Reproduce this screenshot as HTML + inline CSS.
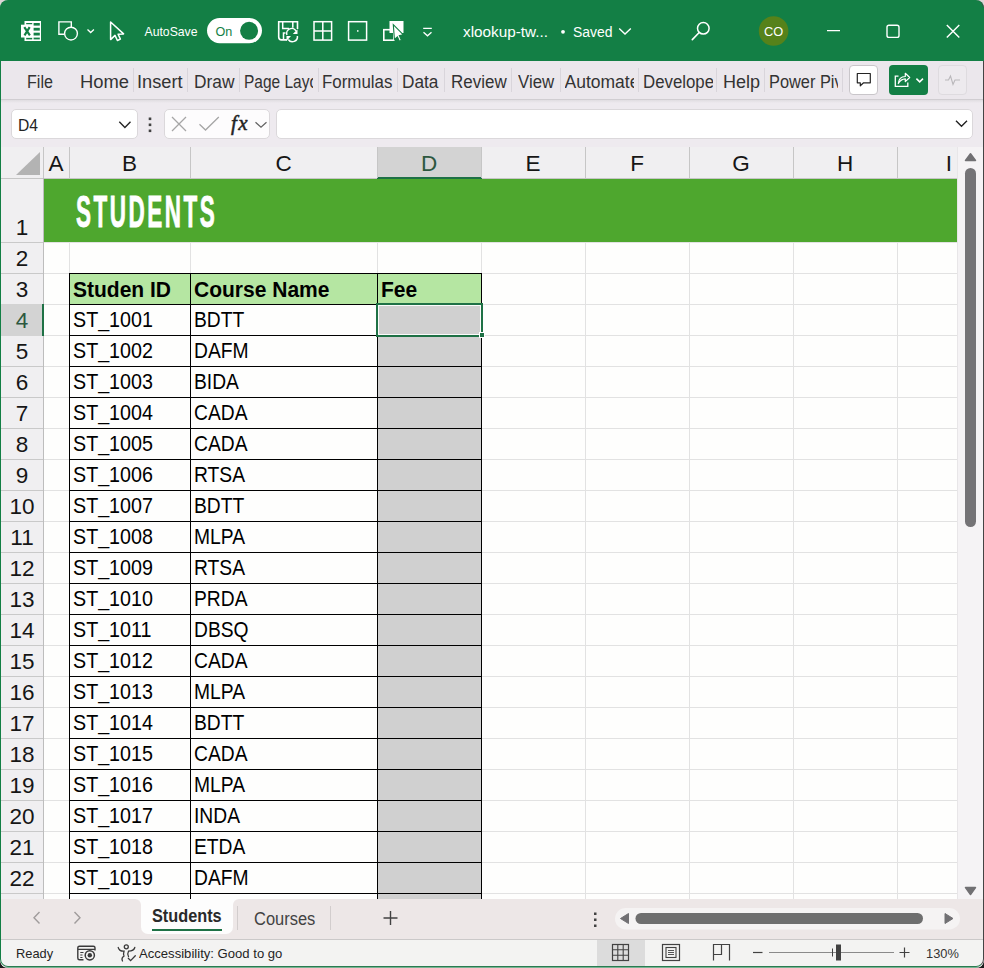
<!DOCTYPE html>
<html><head><meta charset="utf-8"><style>
*{margin:0;padding:0;box-sizing:border-box}
html,body{width:984px;height:968px;overflow:hidden;background:linear-gradient(#dcd7d7 50%,#1b1b1b 50%);font-family:"Liberation Sans",sans-serif}
.a{position:absolute}
#win{position:absolute;left:0;top:0;width:984px;height:968px;border-radius:8px;overflow:hidden;background:#ebe7ec}
.t{position:absolute;white-space:nowrap;line-height:1}
svg{position:absolute;left:0;top:0;overflow:visible}
</style></head>
<body><div id="win">
<div class="a" style="left:0;top:0;width:984px;height:61px;background:#137f45"></div>
<svg width="984" height="61"><rect x="24.5" y="21" width="16.5" height="20" fill="#ffffff"/><rect x="33.6" y="23" width="6.2" height="2.6000000000000014" fill="#137f45"/><rect x="33.6" y="27.8" width="6.2" height="2.8000000000000007" fill="#137f45"/><rect x="33.6" y="32.7" width="6.2" height="2.799999999999997" fill="#137f45"/><rect x="33.6" y="37.6" width="6.2" height="1.7999999999999972" fill="#137f45"/><rect x="26.2" y="23" width="6" height="1.3000000000000007" fill="#137f45"/><rect x="26.2" y="37.7" width="6" height="1.6999999999999957" fill="#137f45"/><rect x="21" y="24.7" width="11.6" height="12.8" fill="#ffffff"/><path d="M24.3 27.2 L29.9 35.3 M29.7 27.2 L24.5 35.3" stroke="#137f45" stroke-width="2.2"/><path d="M71.3 27 V21.9 H58.9 V34.2 H64.2" fill="none" stroke="#ffffff" stroke-width="1.4"/><circle cx="71" cy="33.6" r="6.4" fill="none" stroke="#ffffff" stroke-width="1.4"/><path d="M87.5 29.5 L90.7 32.5 L93.9 29.5" fill="none" stroke="#ffffff" stroke-width="1.3"/><path d="M110.6 22 V39.6 L115 35.4 L117.4 40.5 L120.4 39.1 L118.1 34.2 L123.6 33.9 Z" fill="none" stroke="#ffffff" stroke-width="1.5" stroke-linejoin="round"/><text x="144.5" y="36" font-family="Liberation Sans" font-size="13.3" fill="#ffffff" textLength="53" lengthAdjust="spacingAndGlyphs">AutoSave</text><rect x="207" y="18" width="55" height="25.2" rx="12.6" fill="#ffffff"/><text x="215.5" y="35.8" font-family="Liberation Sans" font-size="12.6" fill="#137f45">On</text><circle cx="249.1" cy="30.8" r="9" fill="#137f45"/><path d="M287 39.9 H281.5 Q278.7 39.9 278.7 37 V21.8 H297.5 V29" fill="none" stroke="#ffffff" stroke-width="1.6"/><path d="M282.7 22 V28.6 H289 M292.8 22 V27.8 M283.5 40 V33 H285.5" fill="none" stroke="#ffffff" stroke-width="1.5"/><path d="M286.9 35 A5 5 0 0 1 296 31 M297.4 36 A5 5 0 0 1 288.3 39.5" fill="none" stroke="#ffffff" stroke-width="1.5"/><path d="M297.5 29.2 V34 H292.8 Z M286.5 41 V36 H291 Z" fill="#ffffff"/><rect x="314" y="21.7" width="17.6" height="18.4" fill="none" stroke="#ffffff" stroke-width="1.5"/><path d="M322.8 21.7 V40.1 M314 30.9 H331.6" stroke="#ffffff" stroke-width="1.5"/><rect x="348.6" y="21.7" width="18" height="18.4" fill="none" stroke="#ffffff" stroke-width="1.5"/><rect x="357" y="30.2" width="1.5" height="1.5" fill="#ffffff"/><rect x="389.5" y="21" width="14" height="12" fill="#ffffff"/><rect x="383.8" y="29.7" width="10" height="10.5" fill="none" stroke="#ffffff" stroke-width="1.6"/><path d="M393.3 24.6 L403.2 34.7 L399.3 35.6 L401.4 40.2 L399.4 41.2 L397.4 36.8 L394.4 39.4 Z" fill="#ffffff" stroke="#137f45" stroke-width="1.1"/><path d="M423.2 28.3 H431.8 M423.5 32.2 L427.5 35.8 L431.5 32.2" fill="none" stroke="#ffffff" stroke-width="1.3"/><text x="463" y="36.8" font-family="Liberation Sans" font-size="15.3" fill="#ffffff" textLength="85" lengthAdjust="spacingAndGlyphs">xlookup-tw...</text><circle cx="563" cy="31.8" r="1.9" fill="#ffffff"/><text x="573" y="36.8" font-family="Liberation Sans" font-size="15.3" fill="#ffffff" textLength="39.5" lengthAdjust="spacingAndGlyphs">Saved</text><path d="M619.2 28.5 L625 34 L630.8 28.5" fill="none" stroke="#ffffff" stroke-width="1.4"/><circle cx="703.3" cy="28.3" r="5.8" fill="none" stroke="#ffffff" stroke-width="1.5"/><path d="M699.2 32.5 L692.3 39.6" stroke="#ffffff" stroke-width="1.6" stroke-linecap="round"/><circle cx="773.6" cy="31" r="14.8" fill="#56821a"/><text x="773.6" y="35.8" text-anchor="middle" font-family="Liberation Sans" font-size="12.8" fill="#ffffff">CO</text><path d="M827 30.6 H840" stroke="#ffffff" stroke-width="1.4"/><rect x="887" y="25.2" width="12" height="12.2" rx="2" fill="none" stroke="#ffffff" stroke-width="1.4"/><path d="M946.8 25 L959.3 37.5 M959.3 25 L946.8 37.5" stroke="#ffffff" stroke-width="1.4"/></svg>
<div class="a" style="left:1px;top:61px;width:982px;height:38px;background:#ebe7ec"></div>
<div class="t" style="left:26.9px;top:74px;font-size:17.5px;color:#333;transform:scaleX(0.92);transform-origin:0 0">File</div>
<div class="t" style="left:79.5px;top:74px;font-size:17.5px;color:#333;transform:scaleX(1.05);transform-origin:0 0">Home</div>
<div class="t" style="left:136.6px;top:74px;font-size:17.5px;color:#333;transform:scaleX(1.04);transform-origin:0 0">Insert</div>
<div class="t" style="left:193.6px;top:74px;font-size:17.5px;color:#333;transform:scaleX(0.99);transform-origin:0 0">Draw</div>
<div class="t" style="left:243.5px;top:74px;width:69.5px;height:20px;overflow:hidden"><div style="font-size:17.5px;color:#333;transform:scaleX(0.885);transform-origin:0 0">Page Layout</div></div>
<div class="t" style="left:322.4px;top:74px;font-size:17.5px;color:#333;transform:scaleX(0.965);transform-origin:0 0">Formulas</div>
<div class="t" style="left:401.7px;top:74px;font-size:17.5px;color:#333;transform:scaleX(0.985);transform-origin:0 0">Data</div>
<div class="t" style="left:451px;top:74px;font-size:17.5px;color:#333;transform:scaleX(0.97);transform-origin:0 0">Review</div>
<div class="t" style="left:518.3px;top:74px;font-size:17.5px;color:#333;transform:scaleX(0.96);transform-origin:0 0">View</div>
<div class="t" style="left:564.5px;top:74px;width:69.5px;height:20px;overflow:hidden"><div style="font-size:17.5px;color:#333;transform:scaleX(1.0);transform-origin:0 0">Automate</div></div>
<div class="t" style="left:642.6px;top:74px;width:70.39999999999998px;height:20px;overflow:hidden"><div style="font-size:17.5px;color:#333;transform:scaleX(0.96);transform-origin:0 0">Developer</div></div>
<div class="t" style="left:722.6px;top:74px;font-size:17.5px;color:#333;transform:scaleX(1.03);transform-origin:0 0">Help</div>
<div class="t" style="left:768.6px;top:74px;width:69.39999999999998px;height:20px;overflow:hidden"><div style="font-size:17.5px;color:#333;transform:scaleX(0.935);transform-origin:0 0">Power Pivot</div></div>
<div class="a" style="left:133px;top:68px;width:1px;height:24px;background:#d9d5db"></div>
<div class="a" style="left:187px;top:68px;width:1px;height:24px;background:#d9d5db"></div>
<div class="a" style="left:239px;top:68px;width:1px;height:24px;background:#d9d5db"></div>
<div class="a" style="left:318px;top:68px;width:1px;height:24px;background:#d9d5db"></div>
<div class="a" style="left:397px;top:68px;width:1px;height:24px;background:#d9d5db"></div>
<div class="a" style="left:444px;top:68px;width:1px;height:24px;background:#d9d5db"></div>
<div class="a" style="left:511px;top:68px;width:1px;height:24px;background:#d9d5db"></div>
<div class="a" style="left:560px;top:68px;width:1px;height:24px;background:#d9d5db"></div>
<div class="a" style="left:638px;top:68px;width:1px;height:24px;background:#d9d5db"></div>
<div class="a" style="left:716px;top:68px;width:1px;height:24px;background:#d9d5db"></div>
<div class="a" style="left:764px;top:68px;width:1px;height:24px;background:#d9d5db"></div>
<div class="a" style="left:842px;top:68px;width:1px;height:24px;background:#d9d5db"></div>
<div class="a" style="left:849px;top:65px;width:29px;height:30px;background:#fff;border:1px solid #c9c6ca;border-radius:4px"></div>
<svg width="984" height="100"><path d="M857.3 73.5 H870.3 V82.8 H863.6 L860.3 85.8 V82.8 H857.3 Z" fill="none" stroke="#242424" stroke-width="1.2" stroke-linejoin="round"/></svg>
<div class="a" style="left:889px;top:65px;width:39px;height:30px;background:#137f45;border-radius:4px"></div>
<svg width="984" height="100"><path d="M898.5 76.2 H895.3 V86.3 H907.8 V82.5" fill="none" stroke="#fff" stroke-width="1.3"/><path d="M898.3 83.5 Q898.8 76.8 905.3 76.5 V73.3 L909.7 77.5 L905.3 81.6 V78.8 Q900.8 79 898.3 83.5 Z" fill="none" stroke="#fff" stroke-width="1.2" stroke-linejoin="round"/><path d="M916.4 78.6 L919.7 81.9 L923 78.6" fill="none" stroke="#fff" stroke-width="1.5"/></svg>
<div class="a" style="left:938px;top:65px;width:29px;height:30px;background:#edeaee;border:1px solid #dedbdf;border-radius:4px"></div>
<svg width="984" height="100"><path d="M945 80 H948.5 L950.5 76 L953 84.5 L955 80 H960" fill="none" stroke="#b9b7ba" stroke-width="1.1"/></svg>
<div class="a" style="left:1px;top:99px;width:982px;height:48px;background:#eeeaef"></div>
<div class="a" style="left:1px;top:99px;width:982px;height:1px;background:#d0cdd1"></div>
<div class="a" style="left:1px;top:100px;width:982px;height:3px;background:linear-gradient(#e0dde1,#eeeaef)"></div>
<div class="a" style="left:11px;top:109px;width:127px;height:30px;background:#fff;border:1px solid #dbd8db;border-radius:5px"></div>
<div class="t" style="left:18px;top:117px;font-size:17px;color:#242424;transform:scaleX(0.92);transform-origin:0 0">D4</div>
<div class="a" style="left:164px;top:109px;width:106px;height:30px;background:#fdfcfd;border:1px solid #dbd8db;border-radius:5px"></div>
<div class="a" style="left:276px;top:109px;width:697px;height:30px;background:#fff;border:1px solid #dbd8db;border-radius:5px"></div>
<svg width="984" height="150"><path d="M119.3 121.8 L124.9 127.4 L130.5 121.8" fill="none" stroke="#242424" stroke-width="1.4"/><rect x="148.7" y="117.5" width="2.6" height="2.6" fill="#424242"/><rect x="148.7" y="123.5" width="2.6" height="2.6" fill="#424242"/><rect x="148.7" y="129.5" width="2.6" height="2.6" fill="#424242"/><path d="M172 117 L186 131 M186 117 L172 131" stroke="#a6a6a6" stroke-width="1.3"/><path d="M199.5 124.3 L205.5 130 L218.8 117" fill="none" stroke="#a6a6a6" stroke-width="1.3"/><text x="231" y="130" font-family="Liberation Serif" font-style="italic" font-size="21" fill="#242424" stroke="#242424" stroke-width="0.5" letter-spacing="1.5">fx</text><path d="M255.5 122.3 L261 127.3 L266.5 122.3" fill="none" stroke="#616161" stroke-width="1.2"/><path d="M956 120.8 L961.5 126.3 L967 120.8" fill="none" stroke="#242424" stroke-width="1.4"/></svg>
<div class="a" style="left:1px;top:147px;width:956px;height:31px;background:#f0eff1"></div>
<div class="a" style="left:1px;top:178px;width:42px;height:721px;background:#f0eff1"></div>
<div class="a" style="left:43px;top:178px;width:914px;height:721px;background:#fefefd"></div>
<svg width="984" height="200"><path d="M40 152 V175 H16 Z" fill="#b3b3b3"/></svg>
<div class="a" style="left:43px;top:242px;width:914px;height:1px;background:#e2e2e2"></div>
<div class="a" style="left:43px;top:273px;width:914px;height:1px;background:#e2e2e2"></div>
<div class="a" style="left:43px;top:304px;width:914px;height:1px;background:#e2e2e2"></div>
<div class="a" style="left:43px;top:335px;width:914px;height:1px;background:#e2e2e2"></div>
<div class="a" style="left:43px;top:366px;width:914px;height:1px;background:#e2e2e2"></div>
<div class="a" style="left:43px;top:397px;width:914px;height:1px;background:#e2e2e2"></div>
<div class="a" style="left:43px;top:428px;width:914px;height:1px;background:#e2e2e2"></div>
<div class="a" style="left:43px;top:459px;width:914px;height:1px;background:#e2e2e2"></div>
<div class="a" style="left:43px;top:490px;width:914px;height:1px;background:#e2e2e2"></div>
<div class="a" style="left:43px;top:521px;width:914px;height:1px;background:#e2e2e2"></div>
<div class="a" style="left:43px;top:552px;width:914px;height:1px;background:#e2e2e2"></div>
<div class="a" style="left:43px;top:583px;width:914px;height:1px;background:#e2e2e2"></div>
<div class="a" style="left:43px;top:614px;width:914px;height:1px;background:#e2e2e2"></div>
<div class="a" style="left:43px;top:645px;width:914px;height:1px;background:#e2e2e2"></div>
<div class="a" style="left:43px;top:676px;width:914px;height:1px;background:#e2e2e2"></div>
<div class="a" style="left:43px;top:707px;width:914px;height:1px;background:#e2e2e2"></div>
<div class="a" style="left:43px;top:738px;width:914px;height:1px;background:#e2e2e2"></div>
<div class="a" style="left:43px;top:769px;width:914px;height:1px;background:#e2e2e2"></div>
<div class="a" style="left:43px;top:800px;width:914px;height:1px;background:#e2e2e2"></div>
<div class="a" style="left:43px;top:831px;width:914px;height:1px;background:#e2e2e2"></div>
<div class="a" style="left:43px;top:862px;width:914px;height:1px;background:#e2e2e2"></div>
<div class="a" style="left:43px;top:893px;width:914px;height:1px;background:#e2e2e2"></div>
<div class="a" style="left:69px;top:242px;width:1px;height:657px;background:#e2e2e2"></div>
<div class="a" style="left:190px;top:242px;width:1px;height:657px;background:#e2e2e2"></div>
<div class="a" style="left:377px;top:242px;width:1px;height:657px;background:#e2e2e2"></div>
<div class="a" style="left:481px;top:242px;width:1px;height:657px;background:#e2e2e2"></div>
<div class="a" style="left:585px;top:242px;width:1px;height:657px;background:#e2e2e2"></div>
<div class="a" style="left:689px;top:242px;width:1px;height:657px;background:#e2e2e2"></div>
<div class="a" style="left:793px;top:242px;width:1px;height:657px;background:#e2e2e2"></div>
<div class="a" style="left:897px;top:242px;width:1px;height:657px;background:#e2e2e2"></div>
<div class="a" style="left:44px;top:178px;width:913px;height:64px;background:#4ea72e"></div>
<div class="t" style="left:76px;top:189px;font-size:45px;font-weight:bold;color:#fff;letter-spacing:5px;-webkit-text-stroke:0.9px #fff;transform:scaleX(0.5);transform-origin:0 0">STUDENTS</div>
<div class="a" style="left:377px;top:147px;width:105px;height:32px;background:#d3d3d3;border-bottom:2px solid #1e7145"></div>
<div class="a" style="left:43px;top:147px;width:1px;height:31px;background:#c6c6c6"></div>
<div class="t" style="left:43px;top:153px;width:26px;text-align:center;font-size:22.5px;color:#161616">A</div>
<div class="a" style="left:69px;top:147px;width:1px;height:31px;background:#c6c6c6"></div>
<div class="t" style="left:69px;top:153px;width:121px;text-align:center;font-size:22.5px;color:#161616">B</div>
<div class="a" style="left:190px;top:147px;width:1px;height:31px;background:#c6c6c6"></div>
<div class="t" style="left:190px;top:153px;width:187px;text-align:center;font-size:22.5px;color:#161616">C</div>
<div class="a" style="left:377px;top:147px;width:1px;height:31px;background:#c6c6c6"></div>
<div class="t" style="left:377px;top:153px;width:104px;text-align:center;font-size:22.5px;color:#2d5840">D</div>
<div class="a" style="left:481px;top:147px;width:1px;height:31px;background:#c6c6c6"></div>
<div class="t" style="left:481px;top:153px;width:104px;text-align:center;font-size:22.5px;color:#161616">E</div>
<div class="a" style="left:585px;top:147px;width:1px;height:31px;background:#c6c6c6"></div>
<div class="t" style="left:585px;top:153px;width:104px;text-align:center;font-size:22.5px;color:#161616">F</div>
<div class="a" style="left:689px;top:147px;width:1px;height:31px;background:#c6c6c6"></div>
<div class="t" style="left:689px;top:153px;width:104px;text-align:center;font-size:22.5px;color:#161616">G</div>
<div class="a" style="left:793px;top:147px;width:1px;height:31px;background:#c6c6c6"></div>
<div class="t" style="left:793px;top:153px;width:104px;text-align:center;font-size:22.5px;color:#161616">H</div>
<div class="a" style="left:897px;top:147px;width:1px;height:31px;background:#c6c6c6"></div>
<div class="t" style="left:897px;top:153px;width:104px;text-align:center;font-size:22.5px;color:#161616">I</div>
<div class="a" style="left:1px;top:178px;width:376px;height:1px;background:#c6c6c6"></div>
<div class="a" style="left:482px;top:178px;width:475px;height:1px;background:#c6c6c6"></div>
<div class="a" style="left:1px;top:242px;width:42px;height:1px;background:#c9c9c9"></div>
<div class="t" style="left:1px;top:217px;width:42px;text-align:center;font-size:22.5px;color:#161616">1</div>
<div class="a" style="left:1px;top:273px;width:42px;height:1px;background:#c9c9c9"></div>
<div class="t" style="left:1px;top:248px;width:42px;text-align:center;font-size:22.5px;color:#161616">2</div>
<div class="a" style="left:1px;top:304px;width:42px;height:1px;background:#c9c9c9"></div>
<div class="t" style="left:1px;top:279px;width:42px;text-align:center;font-size:22.5px;color:#161616">3</div>
<div class="a" style="left:1px;top:335px;width:42px;height:1px;background:#c9c9c9"></div>
<div class="t" style="left:1px;top:310px;width:42px;text-align:center;font-size:22.5px;color:#2d5840">4</div>
<div class="a" style="left:1px;top:366px;width:42px;height:1px;background:#c9c9c9"></div>
<div class="t" style="left:1px;top:341px;width:42px;text-align:center;font-size:22.5px;color:#161616">5</div>
<div class="a" style="left:1px;top:397px;width:42px;height:1px;background:#c9c9c9"></div>
<div class="t" style="left:1px;top:372px;width:42px;text-align:center;font-size:22.5px;color:#161616">6</div>
<div class="a" style="left:1px;top:428px;width:42px;height:1px;background:#c9c9c9"></div>
<div class="t" style="left:1px;top:403px;width:42px;text-align:center;font-size:22.5px;color:#161616">7</div>
<div class="a" style="left:1px;top:459px;width:42px;height:1px;background:#c9c9c9"></div>
<div class="t" style="left:1px;top:434px;width:42px;text-align:center;font-size:22.5px;color:#161616">8</div>
<div class="a" style="left:1px;top:490px;width:42px;height:1px;background:#c9c9c9"></div>
<div class="t" style="left:1px;top:465px;width:42px;text-align:center;font-size:22.5px;color:#161616">9</div>
<div class="a" style="left:1px;top:521px;width:42px;height:1px;background:#c9c9c9"></div>
<div class="t" style="left:1px;top:496px;width:42px;text-align:center;font-size:22.5px;color:#161616">10</div>
<div class="a" style="left:1px;top:552px;width:42px;height:1px;background:#c9c9c9"></div>
<div class="t" style="left:1px;top:527px;width:42px;text-align:center;font-size:22.5px;color:#161616">11</div>
<div class="a" style="left:1px;top:583px;width:42px;height:1px;background:#c9c9c9"></div>
<div class="t" style="left:1px;top:558px;width:42px;text-align:center;font-size:22.5px;color:#161616">12</div>
<div class="a" style="left:1px;top:614px;width:42px;height:1px;background:#c9c9c9"></div>
<div class="t" style="left:1px;top:589px;width:42px;text-align:center;font-size:22.5px;color:#161616">13</div>
<div class="a" style="left:1px;top:645px;width:42px;height:1px;background:#c9c9c9"></div>
<div class="t" style="left:1px;top:620px;width:42px;text-align:center;font-size:22.5px;color:#161616">14</div>
<div class="a" style="left:1px;top:676px;width:42px;height:1px;background:#c9c9c9"></div>
<div class="t" style="left:1px;top:651px;width:42px;text-align:center;font-size:22.5px;color:#161616">15</div>
<div class="a" style="left:1px;top:707px;width:42px;height:1px;background:#c9c9c9"></div>
<div class="t" style="left:1px;top:682px;width:42px;text-align:center;font-size:22.5px;color:#161616">16</div>
<div class="a" style="left:1px;top:738px;width:42px;height:1px;background:#c9c9c9"></div>
<div class="t" style="left:1px;top:713px;width:42px;text-align:center;font-size:22.5px;color:#161616">17</div>
<div class="a" style="left:1px;top:769px;width:42px;height:1px;background:#c9c9c9"></div>
<div class="t" style="left:1px;top:744px;width:42px;text-align:center;font-size:22.5px;color:#161616">18</div>
<div class="a" style="left:1px;top:800px;width:42px;height:1px;background:#c9c9c9"></div>
<div class="t" style="left:1px;top:775px;width:42px;text-align:center;font-size:22.5px;color:#161616">19</div>
<div class="a" style="left:1px;top:831px;width:42px;height:1px;background:#c9c9c9"></div>
<div class="t" style="left:1px;top:806px;width:42px;text-align:center;font-size:22.5px;color:#161616">20</div>
<div class="a" style="left:1px;top:862px;width:42px;height:1px;background:#c9c9c9"></div>
<div class="t" style="left:1px;top:837px;width:42px;text-align:center;font-size:22.5px;color:#161616">21</div>
<div class="a" style="left:1px;top:893px;width:42px;height:1px;background:#c9c9c9"></div>
<div class="t" style="left:1px;top:868px;width:42px;text-align:center;font-size:22.5px;color:#161616">22</div>
<div class="t" style="left:1px;top:899px;width:42px;text-align:center;font-size:22.5px;color:#161616">23</div>
<div class="a" style="left:43px;top:178px;width:1px;height:721px;background:#bdbdbd"></div>
<div class="a" style="left:1px;top:304px;width:43px;height:32px;background:#d3d3d3;border-right:2px solid #1e7145"></div>
<div class="t" style="left:1px;top:310px;width:42px;text-align:center;font-size:22.5px;color:#2d5840">4</div>
<div class="a" style="left:69px;top:273px;width:413px;height:32px;background:#b5e6a2"></div>
<div class="a" style="left:377px;top:304px;width:105px;height:595px;background:#d0d0d0"></div>
<div class="a" style="left:69px;top:273px;width:413px;height:1px;background:#000"></div>
<div class="a" style="left:69px;top:304px;width:413px;height:1px;background:#000"></div>
<div class="a" style="left:69px;top:335px;width:413px;height:1px;background:#000"></div>
<div class="a" style="left:69px;top:366px;width:413px;height:1px;background:#000"></div>
<div class="a" style="left:69px;top:397px;width:413px;height:1px;background:#000"></div>
<div class="a" style="left:69px;top:428px;width:413px;height:1px;background:#000"></div>
<div class="a" style="left:69px;top:459px;width:413px;height:1px;background:#000"></div>
<div class="a" style="left:69px;top:490px;width:413px;height:1px;background:#000"></div>
<div class="a" style="left:69px;top:521px;width:413px;height:1px;background:#000"></div>
<div class="a" style="left:69px;top:552px;width:413px;height:1px;background:#000"></div>
<div class="a" style="left:69px;top:583px;width:413px;height:1px;background:#000"></div>
<div class="a" style="left:69px;top:614px;width:413px;height:1px;background:#000"></div>
<div class="a" style="left:69px;top:645px;width:413px;height:1px;background:#000"></div>
<div class="a" style="left:69px;top:676px;width:413px;height:1px;background:#000"></div>
<div class="a" style="left:69px;top:707px;width:413px;height:1px;background:#000"></div>
<div class="a" style="left:69px;top:738px;width:413px;height:1px;background:#000"></div>
<div class="a" style="left:69px;top:769px;width:413px;height:1px;background:#000"></div>
<div class="a" style="left:69px;top:800px;width:413px;height:1px;background:#000"></div>
<div class="a" style="left:69px;top:831px;width:413px;height:1px;background:#000"></div>
<div class="a" style="left:69px;top:862px;width:413px;height:1px;background:#000"></div>
<div class="a" style="left:69px;top:893px;width:413px;height:1px;background:#000"></div>
<div class="a" style="left:69px;top:273px;width:1px;height:626px;background:#000"></div>
<div class="a" style="left:190px;top:273px;width:1px;height:626px;background:#000"></div>
<div class="a" style="left:377px;top:273px;width:1px;height:626px;background:#000"></div>
<div class="a" style="left:481px;top:273px;width:1px;height:626px;background:#000"></div>
<div class="t" style="left:73px;top:279px;font-size:22px;font-weight:bold;color:#000;transform:scaleX(0.955);transform-origin:0 0">Studen ID</div>
<div class="t" style="left:194px;top:279px;font-size:22px;font-weight:bold;color:#000;transform:scaleX(0.955);transform-origin:0 0">Course Name</div>
<div class="t" style="left:381px;top:279px;font-size:22px;font-weight:bold;color:#000;transform:scaleX(0.955);transform-origin:0 0">Fee</div>
<div class="t" style="left:73px;top:309px;font-size:22px;color:#000;transform:scaleX(0.895);transform-origin:0 0">ST_1001</div>
<div class="t" style="left:194px;top:309px;font-size:22px;color:#000;transform:scaleX(0.875);transform-origin:0 0">BDTT</div>
<div class="t" style="left:73px;top:340px;font-size:22px;color:#000;transform:scaleX(0.895);transform-origin:0 0">ST_1002</div>
<div class="t" style="left:194px;top:340px;font-size:22px;color:#000;transform:scaleX(0.875);transform-origin:0 0">DAFM</div>
<div class="t" style="left:73px;top:371px;font-size:22px;color:#000;transform:scaleX(0.895);transform-origin:0 0">ST_1003</div>
<div class="t" style="left:194px;top:371px;font-size:22px;color:#000;transform:scaleX(0.875);transform-origin:0 0">BIDA</div>
<div class="t" style="left:73px;top:402px;font-size:22px;color:#000;transform:scaleX(0.895);transform-origin:0 0">ST_1004</div>
<div class="t" style="left:194px;top:402px;font-size:22px;color:#000;transform:scaleX(0.875);transform-origin:0 0">CADA</div>
<div class="t" style="left:73px;top:433px;font-size:22px;color:#000;transform:scaleX(0.895);transform-origin:0 0">ST_1005</div>
<div class="t" style="left:194px;top:433px;font-size:22px;color:#000;transform:scaleX(0.875);transform-origin:0 0">CADA</div>
<div class="t" style="left:73px;top:464px;font-size:22px;color:#000;transform:scaleX(0.895);transform-origin:0 0">ST_1006</div>
<div class="t" style="left:194px;top:464px;font-size:22px;color:#000;transform:scaleX(0.875);transform-origin:0 0">RTSA</div>
<div class="t" style="left:73px;top:495px;font-size:22px;color:#000;transform:scaleX(0.895);transform-origin:0 0">ST_1007</div>
<div class="t" style="left:194px;top:495px;font-size:22px;color:#000;transform:scaleX(0.875);transform-origin:0 0">BDTT</div>
<div class="t" style="left:73px;top:526px;font-size:22px;color:#000;transform:scaleX(0.895);transform-origin:0 0">ST_1008</div>
<div class="t" style="left:194px;top:526px;font-size:22px;color:#000;transform:scaleX(0.875);transform-origin:0 0">MLPA</div>
<div class="t" style="left:73px;top:557px;font-size:22px;color:#000;transform:scaleX(0.895);transform-origin:0 0">ST_1009</div>
<div class="t" style="left:194px;top:557px;font-size:22px;color:#000;transform:scaleX(0.875);transform-origin:0 0">RTSA</div>
<div class="t" style="left:73px;top:588px;font-size:22px;color:#000;transform:scaleX(0.895);transform-origin:0 0">ST_1010</div>
<div class="t" style="left:194px;top:588px;font-size:22px;color:#000;transform:scaleX(0.875);transform-origin:0 0">PRDA</div>
<div class="t" style="left:73px;top:619px;font-size:22px;color:#000;transform:scaleX(0.895);transform-origin:0 0">ST_1011</div>
<div class="t" style="left:194px;top:619px;font-size:22px;color:#000;transform:scaleX(0.875);transform-origin:0 0">DBSQ</div>
<div class="t" style="left:73px;top:650px;font-size:22px;color:#000;transform:scaleX(0.895);transform-origin:0 0">ST_1012</div>
<div class="t" style="left:194px;top:650px;font-size:22px;color:#000;transform:scaleX(0.875);transform-origin:0 0">CADA</div>
<div class="t" style="left:73px;top:681px;font-size:22px;color:#000;transform:scaleX(0.895);transform-origin:0 0">ST_1013</div>
<div class="t" style="left:194px;top:681px;font-size:22px;color:#000;transform:scaleX(0.875);transform-origin:0 0">MLPA</div>
<div class="t" style="left:73px;top:712px;font-size:22px;color:#000;transform:scaleX(0.895);transform-origin:0 0">ST_1014</div>
<div class="t" style="left:194px;top:712px;font-size:22px;color:#000;transform:scaleX(0.875);transform-origin:0 0">BDTT</div>
<div class="t" style="left:73px;top:743px;font-size:22px;color:#000;transform:scaleX(0.895);transform-origin:0 0">ST_1015</div>
<div class="t" style="left:194px;top:743px;font-size:22px;color:#000;transform:scaleX(0.875);transform-origin:0 0">CADA</div>
<div class="t" style="left:73px;top:774px;font-size:22px;color:#000;transform:scaleX(0.895);transform-origin:0 0">ST_1016</div>
<div class="t" style="left:194px;top:774px;font-size:22px;color:#000;transform:scaleX(0.875);transform-origin:0 0">MLPA</div>
<div class="t" style="left:73px;top:805px;font-size:22px;color:#000;transform:scaleX(0.895);transform-origin:0 0">ST_1017</div>
<div class="t" style="left:194px;top:805px;font-size:22px;color:#000;transform:scaleX(0.875);transform-origin:0 0">INDA</div>
<div class="t" style="left:73px;top:836px;font-size:22px;color:#000;transform:scaleX(0.895);transform-origin:0 0">ST_1018</div>
<div class="t" style="left:194px;top:836px;font-size:22px;color:#000;transform:scaleX(0.875);transform-origin:0 0">ETDA</div>
<div class="t" style="left:73px;top:867px;font-size:22px;color:#000;transform:scaleX(0.895);transform-origin:0 0">ST_1019</div>
<div class="t" style="left:194px;top:867px;font-size:22px;color:#000;transform:scaleX(0.875);transform-origin:0 0">DAFM</div>
<div class="t" style="left:73px;top:898px;font-size:22px;color:#000;transform:scaleX(0.895);transform-origin:0 0">ST_1020</div>
<div class="t" style="left:194px;top:898px;font-size:22px;color:#000;transform:scaleX(0.875);transform-origin:0 0">DAFM</div>
<div class="a" style="left:376px;top:303px;width:107px;height:34px;border:2px solid #1e7145"></div>
<div class="a" style="left:378px;top:305px;width:103px;height:30px;border:1px solid #fbfbfb"></div>
<div class="a" style="left:479px;top:332px;width:6px;height:6px;background:#1e7145;border:1px solid #fff"></div>
<div class="a" style="left:957px;top:147px;width:26px;height:752px;background:#f5f3f5"></div>
<svg width="984" height="968"><path d="M965.5 160.5 L970.5 153.8 L975.5 160.5 Z" fill="#717073" stroke="#717073" stroke-width="1.5" stroke-linejoin="round"/><path d="M965.5 887.5 L970.5 894.5 L975.5 887.5 Z" fill="#717073" stroke="#717073" stroke-width="1.5" stroke-linejoin="round"/></svg>
<div class="a" style="left:957px;top:147px;width:1px;height:752px;background:#e8e6e8"></div>
<div class="a" style="left:965px;top:168px;width:11px;height:359px;background:#747376;border-radius:6px"></div>
<div class="a" style="left:1px;top:899px;width:982px;height:40px;background:#fdfdfd"></div>
<div class="a" style="left:1px;top:925px;width:982px;height:14px;background:#ede7e7"></div>
<div class="a" style="left:141px;top:899px;width:92px;height:35px;background:#fdfdfd;border-radius:0 0 7px 7px"></div>
<div class="a" style="left:1px;top:899px;width:140px;height:40px;background:#ede7e7;border-top-right-radius:6px"></div>
<div class="a" style="left:233px;top:899px;width:750px;height:40px;background:#ede7e7;border-top-left-radius:6px"></div>
<div class="t" style="left:152px;top:908px;font-size:17.5px;font-weight:bold;color:#2a2a2a;transform:scaleX(0.93);transform-origin:0 0">Students</div>
<div class="a" style="left:152px;top:929px;width:70px;height:2px;background:#1e7145"></div>
<div class="t" style="left:254px;top:911px;font-size:17.5px;color:#424242;transform:scaleX(0.94);transform-origin:0 0">Courses</div>
<div class="a" style="left:237px;top:906px;width:1px;height:24px;background:#d2cdcd"></div>
<div class="a" style="left:330px;top:906px;width:1px;height:24px;background:#d2cdcd"></div>
<svg width="984" height="968"><path d="M39.5 912 L34 917.8 L39.5 923.6" fill="none" stroke="#a09c9c" stroke-width="1.4"/><path d="M74.5 912 L80 917.8 L74.5 923.6" fill="none" stroke="#a09c9c" stroke-width="1.4"/><path d="M390.5 911 V925 M383.5 918 H397.5" stroke="#424242" stroke-width="1.4"/><rect x="594" y="912.5" width="2.5" height="2.5" fill="#424242"/><rect x="594" y="918.5" width="2.5" height="2.5" fill="#424242"/><rect x="594" y="924.5" width="2.5" height="2.5" fill="#424242"/><rect x="615" y="908" width="345" height="21.5" rx="10.7" fill="#f5f3f3"/><path d="M628.5 913.5 L620.5 918.5 L628.5 923.5 Z" fill="#717073" stroke="#717073" stroke-width="1" stroke-linejoin="round"/><path d="M945 913.5 L953 918.5 L945 923.5 Z" fill="#717073" stroke="#717073" stroke-width="1" stroke-linejoin="round"/><rect x="635.5" y="913" width="287.5" height="11" rx="5.5" fill="#6e6e6e"/></svg>
<div class="a" style="left:1px;top:939px;width:982px;height:1px;background:#cbc9c9"></div>
<div class="a" style="left:1px;top:940px;width:982px;height:27px;background:#f3f3f2"></div>
<div class="t" style="left:16px;top:947px;font-size:13.5px;color:#242424;transform:scaleX(0.95);transform-origin:0 0">Ready</div>
<div class="t" style="left:139px;top:947px;font-size:13.5px;color:#242424;transform:scaleX(0.97);transform-origin:0 0">Accessibility: Good to go</div>
<div class="t" style="left:926px;top:947px;font-size:13.5px;color:#333;transform:scaleX(0.95);transform-origin:0 0">130%</div>
<div class="a" style="left:597px;top:940px;width:48px;height:27px;background:#dcdcdc"></div>
<svg width="984" height="968"><path d="M83.5 959.8 H79.5 Q77.8 959.8 77.8 958 V947.8 Q77.8 946.2 79.5 946.2 H93.3 Q95 946.2 95 947.8 V950.5" fill="none" stroke="#3a3a3a" stroke-width="1.4"/><path d="M78 949.3 H95" stroke="#3a3a3a" stroke-width="1.3"/><path d="M80.3 952.5 H83.5 M80.3 955 H82.5 M80.3 957.5 H82.5" stroke="#3a3a3a" stroke-width="1.1"/><circle cx="89.8" cy="955.3" r="4.6" fill="#f3f3f2" stroke="#3a3a3a" stroke-width="1.5"/><circle cx="89.8" cy="955.3" r="2.2" fill="#3a3a3a"/><circle cx="126.3" cy="946.8" r="2" fill="none" stroke="#3a3a3a" stroke-width="1.3"/><path d="M118.2 947.5 Q119.5 951.5 124 951.2 Q123 954.5 124 956 Q121 958 122.5 961 M134.8 947.5 Q134 951 128.5 951.2 Q127 954 128.5 956.5" fill="none" stroke="#3a3a3a" stroke-width="1.3" stroke-linecap="round"/><path d="M128.3 958.3 L130.6 960.6 L135.3 955.8" fill="none" stroke="#3a3a3a" stroke-width="1.3" stroke-linecap="round"/><rect x="612.5" y="944.5" width="16" height="16" fill="none" stroke="#424242" stroke-width="1.2"/><path d="M612.5 949.8 H628.5 M612.5 955.2 H628.5 M617.8 944.5 V960.5 M623.2 944.5 V960.5" stroke="#424242" stroke-width="1.1"/><rect x="662.5" y="944.5" width="17" height="16" fill="none" stroke="#424242" stroke-width="1.2"/><rect x="666" y="947.5" width="10" height="10" fill="none" stroke="#424242" stroke-width="1.1"/><path d="M668 950.5 H674 M668 952.5 H674 M668 954.5 H674" stroke="#424242" stroke-width="0.9"/><path d="M713.5 960.5 V944.5 H729.5 V960.5 M713.5 954.5 H721.5 V944.5" fill="none" stroke="#424242" stroke-width="1.2"/><path d="M753 952.5 H762.5" stroke="#424242" stroke-width="1.2"/><path d="M769 952.5 H894" stroke="#8a8a8a" stroke-width="1"/><path d="M832.5 948.5 V956.5" stroke="#424242" stroke-width="1"/><rect x="836" y="944.5" width="5" height="16" fill="#424242"/><path d="M899.5 952.5 H909.5 M904.5 947.5 V957.5" stroke="#424242" stroke-width="1.2"/></svg>
<div class="a" style="left:0;top:0;width:984px;height:967px;border-style:solid;border-width:0 1px 1px 1px;border-color:transparent #444 #2a7b50 #137f45;border-radius:8px"></div>
<div class="a" style="left:6px;top:967px;width:972px;height:1px;background:#78b394"></div>
<div class="a" style="left:982px;top:7px;width:2px;height:54px;background:#137f45"></div>
</div></body></html>
